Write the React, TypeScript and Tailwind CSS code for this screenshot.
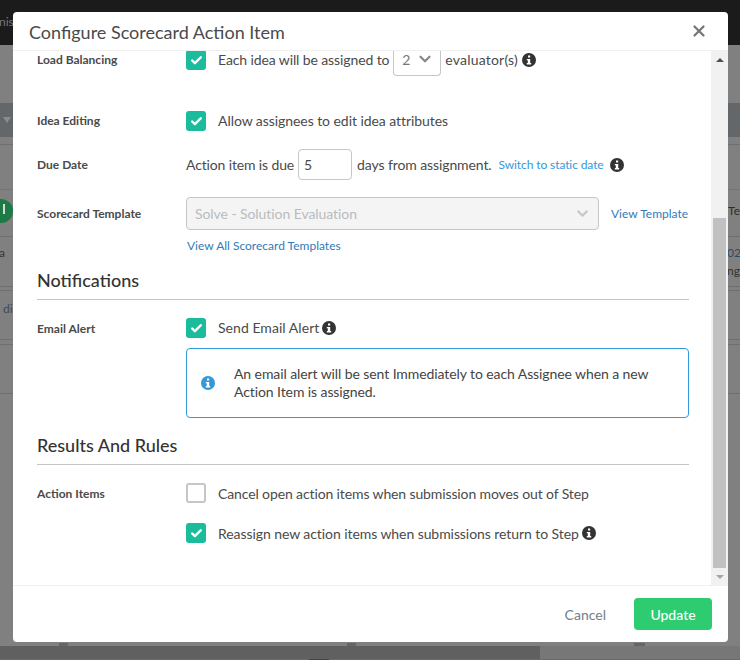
import { Check, ChevronDown, X } from 'lucide-react';

const font = { fontFamily: 'Lato, "Open Sans", sans-serif' };

function Checkbox({ checked = true }: { checked?: boolean }) {
  if (!checked) {
    return <span className="block w-5 h-5 rounded-[3px] border-2 border-[#c4c6c9] bg-white shrink-0" />;
  }
  return (
    <span className="flex items-center justify-center w-5 h-5 rounded-[3px] bg-[#1abc9c] shrink-0">
      <Check size={13} strokeWidth={4.5} className="text-white" />
    </span>
  );
}

function InfoDot({ color = 'bg-[#333333]' }: { color?: string }) {
  return (
    <span className={`inline-flex items-center justify-center w-[14px] h-[14px] rounded-full ${color} shrink-0`}>
      <svg width="8" height="10" viewBox="0 0 8 10">
        <rect x="3" y="0.5" width="2.2" height="2" fill="#fff" />
        <path d="M1.8 4h3.4v4h1v1.4H1.8V8h1V5.3h-1z" fill="#fff" />
      </svg>
    </span>
  );
}

function Label({ children, low = false }: { children: string; low?: boolean }) {
  return (
    <div className={`w-[149px] shrink-0 text-[12px] tracking-normal font-bold text-[#4a4a4a] ${low ? 'pt-[2px]' : ''}`}>
      {children}
    </div>
  );
}

function Backdrop() {
  return (
    <div className="h-[660px] bg-[#808080] flex flex-col overflow-hidden text-[12px] text-[#333]">
      <div className="h-[45px] bg-[#1b1b1b] text-[#777] flex items-start pt-[13px] shrink-0">
        <span className="-ml-[1px]">nis</span>
      </div>
      <div className="h-[58px] shrink-0" />
      <div className="h-[34px] bg-[#646769] shrink-0 flex items-center justify-between">
        <span className="ml-[3px] w-0 h-0 border-x-[4px] border-x-transparent border-t-[6px] border-t-[#8a8d8f]" />
      </div>
      <div className="h-[8px] border-b border-[#6f6f6f] shrink-0" />
      <div className="h-[45px] border-b border-[#757575] shrink-0" />
      <div className="h-[47px] border-b border-[#6f6f6f] shrink-0 flex items-center justify-between pb-[5px]">
        <span className="relative w-[13px] h-[24px] rounded-r-full bg-[#1c7a45]">
          <span className="absolute left-[3px] top-[5px] w-[2px] h-[10px] bg-[#d8d8d8]" />
        </span>
        <span className="text-[#2e2e2e]">Te</span>
      </div>
      <div className="h-[50px] border-b border-[#6f6f6f] shrink-0 flex items-center justify-between leading-[18px]">
        <span className="text-[#333] -ml-[1px] pb-[18px]">a</span>
        <span className="w-[13px] text-[#2b4a66]">02<br /><span className="text-[#333]">ng</span></span>
      </div>
      <div className="h-[4px] border-b border-[#6f6f6f] shrink-0" />
      <div className="h-[49px] border-b border-[#6f6f6f] shrink-0 flex items-start pt-[9px] text-[#3a4a5a]">
        <span className="ml-[3px]">di</span>
      </div>
      <div className="h-[5px] border-b border-[#6f6f6f] shrink-0" />
      <div className="h-[49px] border-b border-[#6f6f6f] shrink-0" />
      <div className="flex-1" />
      <div className="h-[3px] shrink-0 flex">
        <span className="ml-[59px] w-[9px] bg-[#666]" />
        <span className="ml-[279px] w-[9px] bg-[#666]" />
        <span className="ml-[278px] w-[11px] bg-[#666]" />
      </div>
      <div className="h-[13px] shrink-0 flex">
        <div className="w-[540px] bg-[#606060]" />
        <div className="flex-1 bg-[#777777]" />
      </div>
      <div className="h-[1px] shrink-0 bg-[#6a6a6a] flex">
        <span className="ml-[309px] w-[20px] bg-[#444]" />
      </div>
    </div>
  );
}

export default function App() {
  return (
    <div className="relative w-[740px] h-[660px] overflow-hidden" style={font}>
      <Backdrop />

      <div className="absolute left-[13px] top-[12px] w-[715px] h-[630px] bg-white rounded-[4px] flex flex-col overflow-hidden">
        <header className="h-[39px] shrink-0 border-b border-[#f0f0f0] flex items-center justify-between pl-[16px] pr-[20px]">
          <h1 className="text-[18px] text-[#4a4a4a] leading-none pt-[2px]">Configure Scorecard Action Item</h1>
          <X size={18} strokeWidth={3} className="text-[#777777]" />
        </header>

        <div className="flex-1 flex min-h-0">
          <div className="flex-1 overflow-hidden pl-[24px] pr-[22px] text-[14px] text-[#4a4a4a]">
            <div className="flex items-center h-[20px] -mt-[1px]">
              <Label>Load Balancing</Label>
              <Checkbox />
              <span className="ml-[12px] pb-[2px] tracking-[-0.11px]">Each idea will be assigned to</span>
              <span className="self-start mt-[1px] -mb-[6px] ml-[4px] w-[48px] h-[25px] border border-[#c4c6c9] rounded-b-[4px] border-t-0 flex items-center justify-between pl-[8px] pr-[6px] pb-[8px] text-[#777]">
                2
                <ChevronDown size={18} strokeWidth={3} className="text-[#888]" />
              </span>
              <span className="ml-[4px] pb-[2px] tracking-[0.2px]">evaluator(s)</span>
              <span className="ml-[4px] flex"><InfoDot /></span>
            </div>

            <div className="flex items-center h-[20px] mt-[41px]">
              <Label>Idea Editing</Label>
              <Checkbox />
              <span className="ml-[12px] pb-[2px] tracking-[-0.06px]">Allow assignees to edit idea attributes</span>
            </div>

            <div className="flex items-center h-[31px] mt-[18px]">
              <Label>Due Date</Label>
              <span className="tracking-[-0.14px]">Action item is due</span>
              <span className="ml-[4px] w-[54px] h-[31px] border border-[#c4c6c9] rounded-[4px] flex items-center pl-[5px]">5</span>
              <span className="ml-[5px] tracking-[-0.1px]">days from assignment.</span>
              <span className="ml-[7px] text-[12px] tracking-[-0.1px] text-[#3498db]">Switch to static date</span>
              <span className="ml-[6px] flex"><InfoDot /></span>
            </div>

            <div className="flex items-center h-[33px] mt-[17px]">
              <Label>Scorecard Template</Label>
              <div className="w-[413px] h-[33px] bg-[#f4f4f4] border border-[#c4c6c9] rounded-[4px] flex items-center justify-between pl-[8px] pr-[7px] text-[#b8bcc0] tracking-[-0.07px]">
                Solve - Solution Evaluation
                <ChevronDown size={17} strokeWidth={3} className="text-[#c8c8c8]" />
              </div>
              <span className="ml-[12px] text-[12px] text-[#337ab7]">View Template</span>
            </div>
            <div className="ml-[150px] mt-[8px] text-[12px] leading-[16px] text-[#337ab7]">View All Scorecard Templates</div>

            <h2 className="mt-[14px] text-[18px] leading-[24px] font-medium text-[#333333] pb-[7px] border-b border-[#c4c4c4]">Notifications</h2>

            <div className="flex items-center h-[20px] mt-[18px]">
              <Label low>Email Alert</Label>
              <Checkbox />
              <span className="ml-[12px] pb-[2px] tracking-[0.05px]">Send Email Alert</span>
              <span className="ml-[3px] flex"><InfoDot /></span>
            </div>

            <div className="ml-[149px] mt-[10px] h-[70px] border border-[#3498db] rounded-[4px] flex items-center pl-[14px] pr-[30px] leading-[18px] text-[#444] tracking-[-0.09px]">
              <InfoDot color="bg-[#3498db]" />
              <p className="ml-[19px]">An email alert will be sent Immediately to each Assignee when a new Action Item is assigned.</p>
            </div>

            <h2 className="mt-[15px] text-[18px] leading-[24px] font-medium text-[#333333] pb-[7px] border-b border-[#c4c4c4]">Results And Rules</h2>

            <div className="flex items-center h-[20px] mt-[18px]">
              <Label low>Action Items</Label>
              <Checkbox checked={false} />
              <span className="ml-[12px] tracking-[-0.12px]">Cancel open action items when submission moves out of Step</span>
            </div>
            <div className="flex items-center h-[20px] mt-[20px] pl-[149px]">
              <Checkbox />
              <span className="ml-[12px] tracking-[-0.07px]">Reassign new action items when submissions return to Step</span>
              <span className="ml-[3px] flex"><InfoDot /></span>
            </div>
          </div>

          <div className="w-[17px] shrink-0 bg-[#f1f1f1] flex flex-col items-center">
            <div className="h-[17px] flex items-center justify-center">
              <span className="w-0 h-0 border-x-[4px] border-x-transparent border-b-[4px] border-b-[#505050]" />
            </div>
            <div className="flex-1 w-full flex flex-col justify-end px-[2px]">
              <div className="h-[350px] bg-[#c1c1c1]" />
            </div>
            <div className="h-[17px] flex items-center justify-center">
              <span className="w-0 h-0 border-x-[4px] border-x-transparent border-t-[4px] border-t-[#a3a3a3]" />
            </div>
          </div>
        </div>

        <footer className="h-[57px] shrink-0 border-t border-[#f0f0f0] flex items-center justify-end pr-[16px] text-[14px]">
          <span className="text-[#6f7f8c]">Cancel</span>
          <button className="ml-[28px] w-[78px] h-[32px] rounded-[4px] bg-[#2ecc71] text-white font-medium">Update</button>
        </footer>
      </div>
    </div>
  );
}
